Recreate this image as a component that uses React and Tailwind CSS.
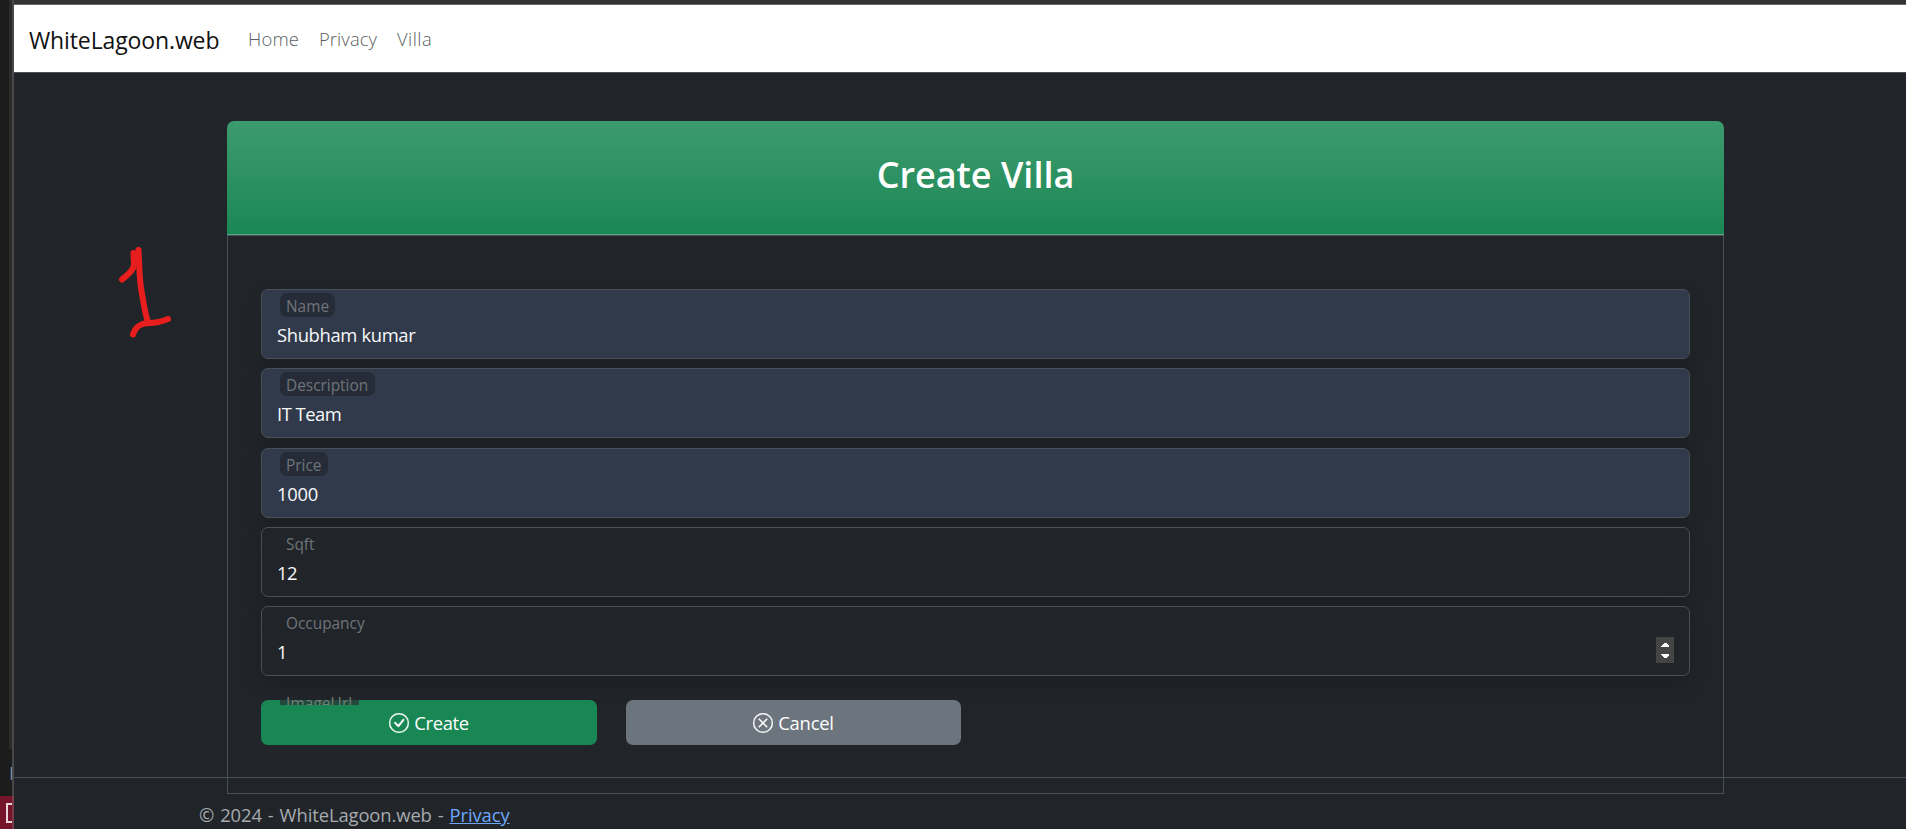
import React from "react";

const FIELDS = [
  { label: "Name", value: "Shubham kumar", filled: true, labelW: "w-[55px]", vt: "tracking-[-0.35px]" },
  { label: "Description", value: "IT Team", filled: true, labelW: "w-[95px]", vt: "tracking-[-0.5px]" },
  { label: "Price", value: "1000", filled: true, labelW: "w-[48px]", vt: "tracking-[-0.3px]" },
  { label: "Sqft", value: "12", labelW: "w-[42px]", vt: "tracking-[-0.4px]" },
  { label: "Occupancy", value: "1", spinner: true, labelW: "w-[92px]", vt: "tracking-[-0.4px]" },
];

function Spinner() {
  return (
    <span className="absolute right-[15px] top-[30px] flex h-[26px] w-[18px] flex-col items-center justify-center bg-[#454545]">
      <svg width="8" height="16" viewBox="0 0 8 16" fill="#fff" shapeRendering="crispEdges">
        <path d="M0 5 V4 L3 1 H5 L8 4 V5Z M0 12 V13 L3 16 H5 L8 13 V12Z" />
      </svg>
    </span>
  );
}

function Field({ label, value, filled, spinner, labelW, vt }) {
  return (
    <div
      className={`relative h-[70px] rounded-[7px] border border-[#495057] px-[15px] shadow-[0_10px_19px_rgba(0,0,0,0.15)] ${
        filled ? "bg-[#313a4b]" : "bg-[#212529]"
      }`}
    >
      <div className={`mt-[3px] ml-[3px] h-[24px] rounded-[7px] pl-[6px] text-[15.4px] leading-[28px] text-[#6f747a] ${labelW} ${filled ? "bg-[#262c37]" : ""}`}>
        {label}
      </div>
      <div className={`mt-[5px] text-[18.4px] leading-[26px] text-[#f8f9fa] ${vt}`}>{value}</div>
      {spinner && <Spinner />}
    </div>
  );
}

function CircleIcon({ d }) {
  return (
    <svg width="20" height="20" viewBox="0 0 16 16" fill="#fff" stroke="#fff" strokeWidth="0.2">
      <path d="M8 15A7 7 0 1 1 8 1a7 7 0 0 1 0 14m0 1A8 8 0 1 0 8 0a8 8 0 0 0 0 16" />
      <path d={d} />
    </svg>
  );
}

const CHECK = "M10.97 4.97a.235.235 0 0 0-.02.022L7.477 9.417 5.384 7.323a.75.75 0 0 0-1.06 1.06L6.97 11.03a.75.75 0 0 0 1.079-.02l3.992-4.99a.75.75 0 0 0-1.071-1.05";
const CROSS = "M4.646 4.646a.5.5 0 0 1 .708 0L8 7.293l2.646-2.647a.5.5 0 0 1 .708.708L8.707 8l2.647 2.646a.5.5 0 0 1-.708.708L8 8.707l-2.646 2.647a.5.5 0 0 1-.708-.708L7.293 8 4.646 5.354a.5.5 0 0 1 0-.708";

export default function App() {
  return (
    <div className="flex h-[829px] w-[1906px] overflow-hidden bg-[#1c1c1c] font-['Open_Sans',sans-serif]">
      <aside className="flex w-[14px] shrink-0 flex-col">
        <div className="flex h-[749px] justify-end">
          <div className="w-[3px] bg-[#2b2b2b]" />
          <div className="w-[2px] bg-[#484848]" />
        </div>
        <div className="flex h-[47px] justify-end overflow-hidden">
          <div className="mt-[14px] h-[20px] w-[3px] overflow-hidden text-[18px] leading-[20px] text-[#8a8f96]">P</div>
          <div className="w-[2px] bg-[#484848]" />
        </div>
        <div className="flex h-[33px] bg-[#75142a]">
          <div className="mt-[7px] ml-[6px] h-[20px] w-[6px] border-2 border-r-0 border-[#e6d5d9]" />
          <div className="ml-auto w-[2px] bg-[#7d3a48]" />
        </div>
      </aside>

      <div className="relative flex min-w-0 flex-1 flex-col bg-[#212529]">
        <div className="h-[5px] shrink-0 border-b border-[#666] bg-[#333]" />
        <nav className="flex h-[68px] shrink-0 items-center border-b border-[#495057] bg-white pl-[15px]">
          <a className="w-[190px] pt-[3px] text-[23px] tracking-[-0.12px] text-[#111]">WhiteLagoon.web</a>
          <div className="flex text-[18.4px] font-light tracking-[0.2px] text-[#5c5f63]">
            <a className="ml-[29px] w-[71px]">Home</a>
            <a className="w-[78px] tracking-[0.1px]">Privacy</a>
            <a className="tracking-[0.45px]">Villa</a>
          </div>
        </nav>

        <main className="ml-[213px] mt-[48px] flex h-[673px] w-[1497px] shrink-0 flex-col">
          <header className="flex h-[115px] shrink-0 justify-center rounded-t-[7px] border-b border-[#495057] bg-linear-to-b from-[#3c9b6e] to-[#198754]">
            <div className="flex w-full justify-center border-b border-[#5aa583] pt-[29px]">
              <h2 className="text-[36px] font-semibold leading-[50px] text-white">Create Villa</h2>
            </div>
          </header>
          <section className="flex-1 border border-t-0 border-[#495057] px-[33px] pt-[53px]">
            <div className="flex flex-col gap-[9.3px]">
              {FIELDS.map((f) => (
                <Field key={f.label} {...f} />
              ))}
            </div>
            <div className="relative mt-[24px] flex gap-[29px]">
              <button className="flex h-[45px] w-[336px] items-center justify-center gap-[5px] rounded-[7px] bg-[#198754] text-[18.4px] tracking-[-0.35px] text-white">
                <CircleIcon d={CHECK} />
                Create
              </button>
              <button className="flex h-[45px] w-[335px] items-center justify-center gap-[5px] rounded-[7px] bg-[#6c757d] text-[18.4px] tracking-[-0.2px] text-white">
                <CircleIcon d={CROSS} />
                Cancel
              </button>
              <div className="absolute left-[19px] top-[-9px] h-[14px] w-[79px] overflow-hidden pl-[6px] text-[15.4px] leading-[25px] tracking-[0.1px] text-[#6f8079]">
                <span className="absolute bottom-0 left-0 h-[5px] w-full bg-[#21483a]" />
                <span className="relative">ImageUrl</span>
              </div>
            </div>
          </section>
        </main>

        <footer className="absolute bottom-0 left-0 h-[52px] w-full border-t border-[#495057]">
          <p className="pl-[185px] pt-[24px] text-[18.4px] leading-[26px] tracking-[-0.1px] [word-spacing:1.3px] text-[#a6abb0]">
            © 2024 - WhiteLagoon.web - <a className="text-[#6ea8fe] underline">Privacy</a>
          </p>
        </footer>

        <svg className="absolute left-[100px] top-[240px]" width="62" height="105" viewBox="114 240 62 105" fill="none" stroke="#e81e1e" strokeWidth="6" strokeLinecap="round" strokeLinejoin="round">
          <path d="M122 279.500C127 275 134 271 134 264L133.500 253" />
          <path d="M138.500 250C139.500 265 139 280 142 294C144 304 145 314 148 322" />
          <path d="M133 334.500C136 325 142 323 150 323C157 323 163 321 168 319" />
        </svg>
      </div>
    </div>
  );
}
